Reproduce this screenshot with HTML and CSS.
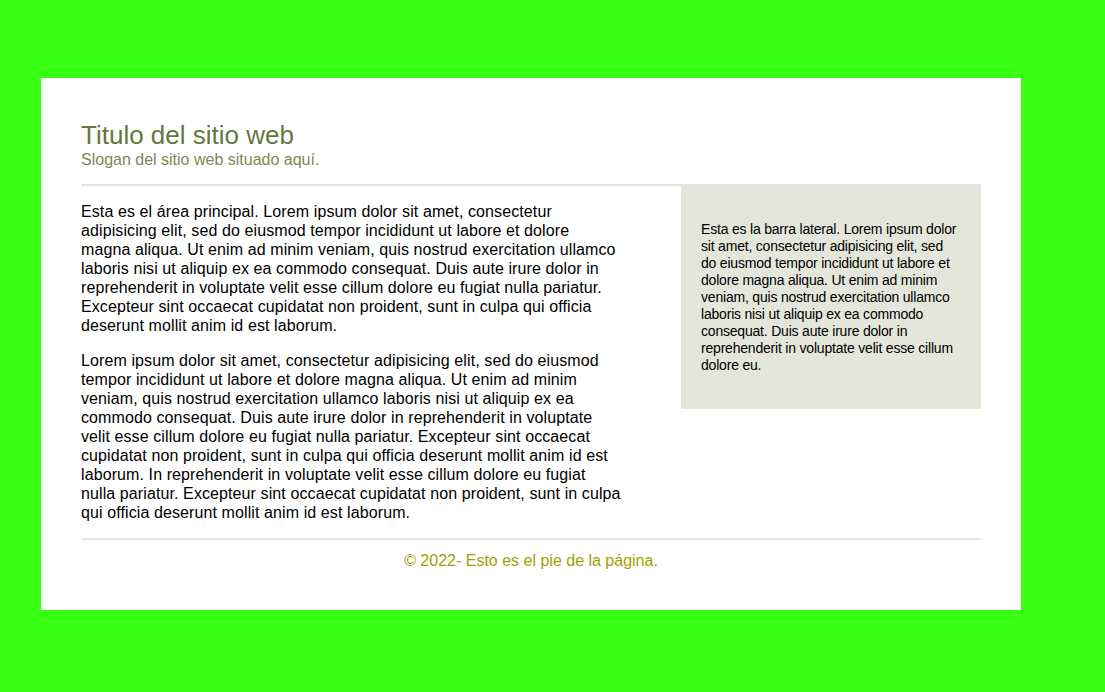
FILE: index.html
```html
<!DOCTYPE html>
<html lang="es">
<head>
<meta charset="utf-8">
<title>Titulo del sitio web</title>
<link rel="stylesheet" href="styles.css">
</head>
<body>
<div class="page">
  <header class="site-header">
    <h1 class="site-title">Titulo del sitio web</h1>
    <p class="site-slogan">Slogan del sitio web situado aquí.</p>
  </header>
  <div class="content">
    <main class="main">
      <p>Esta es el área principal. Lorem ipsum dolor sit amet, consectetur adipisicing elit, sed do eiusmod tempor incididunt ut labore et dolore magna aliqua. Ut enim ad minim veniam, quis nostrud exercitation ullamco laboris nisi ut aliquip ex ea commodo consequat. Duis aute irure dolor in reprehenderit in voluptate velit esse cillum dolore eu fugiat nulla pariatur. Excepteur sint occaecat cupidatat non proident, sunt in culpa qui officia deserunt mollit anim id est laborum.</p>
      <p>Lorem ipsum dolor sit amet, consectetur adipisicing elit, sed do eiusmod tempor incididunt ut labore et dolore magna aliqua. Ut enim ad minim veniam, quis nostrud exercitation ullamco laboris nisi ut aliquip ex ea commodo consequat. Duis aute irure dolor in reprehenderit in voluptate velit esse cillum dolore eu fugiat nulla pariatur. Excepteur sint occaecat cupidatat non proident, sunt in culpa qui officia deserunt mollit anim id est laborum. In reprehenderit in voluptate velit esse cillum dolore eu fugiat nulla pariatur. Excepteur sint occaecat cupidatat non proident, sunt in culpa qui officia deserunt mollit anim id est laborum.</p>
    </main>
    <aside class="sidebar">
      <p>Esta es la barra lateral. Lorem ipsum dolor sit amet, consectetur adipisicing elit, sed do eiusmod tempor incididunt ut labore et dolore magna aliqua. Ut enim ad minim veniam, quis nostrud exercitation ullamco laboris nisi ut aliquip ex ea commodo consequat. Duis aute irure dolor in reprehenderit in voluptate velit esse cillum dolore eu.</p>
    </aside>
  </div>
  <footer class="site-footer">© 2022- Esto es el pie de la página.</footer>
</div>
</body>
</html>
```

FILE: styles.css
```css
html, body {
  margin: 0;
  padding: 0;
}
body {
  background: #39ff14;
  font-family: "Liberation Sans", Arial, sans-serif;
  font-size: 16px;
  color: #000;
  padding-top: 78px;
}
.page {
  width: 900px;
  margin-left: 41px;
  background: #fff;
  padding: 40px 40px 40px;
}
.site-header {
  border-bottom: 2px solid #e6e6df;
  padding-top: 3px;
  padding-bottom: 15px;
}
.site-title {
  margin: 0;
  font-size: 26px;
  font-weight: normal;
  line-height: 29px;
  color: #667641;
}
.site-slogan {
  margin: 0;
  font-size: 16px;
  line-height: 19px;
  color: #7b8a53;
}
.content {
  display: flex;
  align-items: flex-start;
}
.main {
  width: 540px;
  margin-right: 60px;
  line-height: 19px;
  letter-spacing: 0.1px;
}
.main p {
  margin: 16px 0;
}
.sidebar {
  width: 260px;
  background: #e4e6da;
  padding: 20px;
  font-size: 14px;
  line-height: 17px;
  letter-spacing: -0.2px;
}
.sidebar p {
  margin: 15px 0;
}
.site-footer {
  border-top: 2px solid #e6e6df;
  text-align: center;
  color: #a39f00;
  line-height: 19px;
  padding-top: 11px;
}
```
